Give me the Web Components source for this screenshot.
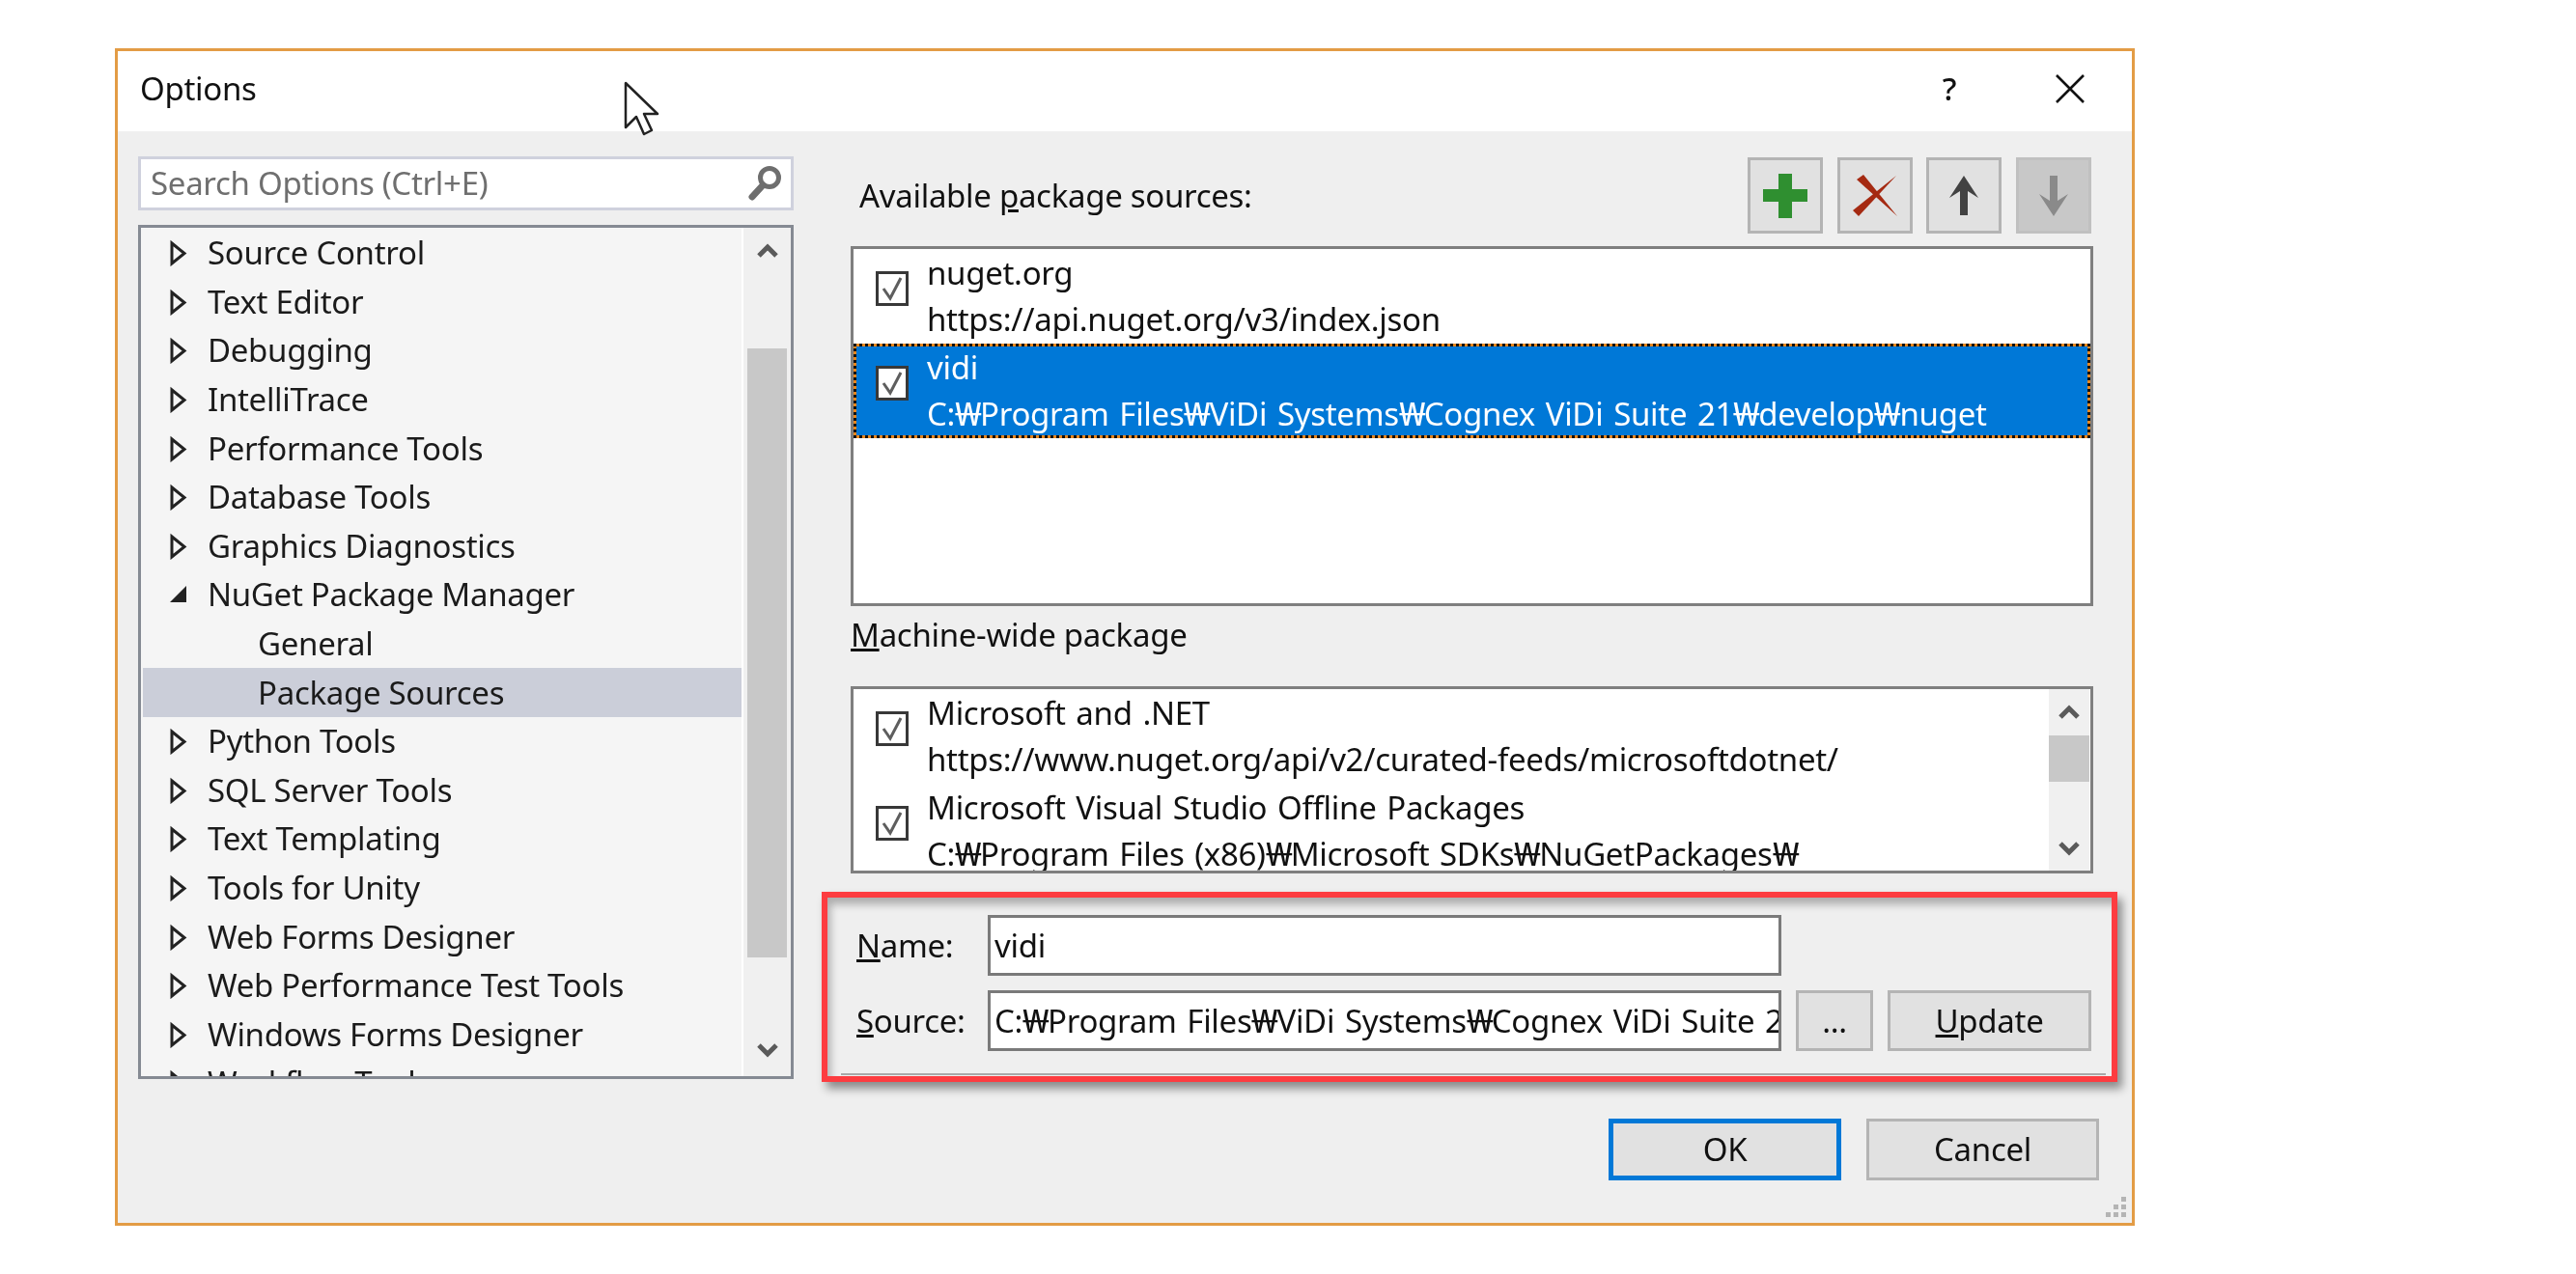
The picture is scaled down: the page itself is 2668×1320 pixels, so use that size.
<!DOCTYPE html>
<html lang="en"><head><meta charset="utf-8"><title>Options</title>
<style>
html,body{margin:0;background:#fff}
body{width:2668px;height:1320px;overflow:hidden;font:33px/48px "Noto Sans","Noto Sans CJK KR",sans-serif;letter-spacing:-.3px;color:#111}
</style></head><body>
<x-dialog>
  <x-titlebar slot="title">Options</x-titlebar>
  <x-search slot="search" placeholder="Search Options (Ctrl+E)"></x-search>
  <x-tree slot="tree">
    <x-node>Source Control</x-node><x-node>Text Editor</x-node><x-node>Debugging</x-node><x-node>IntelliTrace</x-node>
    <x-node>Performance Tools</x-node><x-node>Database Tools</x-node><x-node>Graphics Diagnostics</x-node>
    <x-node open>NuGet Package Manager</x-node><x-node child>General</x-node><x-node child selected>Package Sources</x-node>
    <x-node>Python Tools</x-node><x-node>SQL Server Tools</x-node><x-node>Text Templating</x-node><x-node>Tools for Unity</x-node>
    <x-node>Web Forms Designer</x-node><x-node>Web Performance Test Tools</x-node><x-node>Windows Forms Designer</x-node><x-node>Workflow Tools</x-node>
  </x-tree>
  <x-toolbar slot="right"><span slot="label">Available <u>p</u>ackage sources:</span></x-toolbar>
  <x-list slot="right" tall>
    <x-source name="nuget.org" url="https://api.nuget.org/v3/index.json"></x-source>
    <x-source selected name="vidi" url="C:₩Program Files₩ViDi Systems₩Cognex ViDi Suite 21₩develop₩nuget"></x-source>
  </x-list>
  <x-caption slot="right"><u>M</u>achine-wide package</x-caption>
  <x-list slot="right" scroll>
    <x-source name="Microsoft and .NET" url="https://www.nuget.org/api/v2/curated-feeds/microsoftdotnet/"></x-source>
    <x-source name="Microsoft Visual Studio Offline Packages" url="C:₩Program Files (x86)₩Microsoft SDKs₩NuGetPackages₩"></x-source>
  </x-list>
  <x-form slot="right"></x-form>
  <x-footer slot="right"></x-footer>
</x-dialog>
<script>
function def(name, css, html){
  customElements.define(name, class extends HTMLElement{
    connectedCallback(){
      if(this.shadowRoot) return;
      const r=this.attachShadow({mode:'open'});
      r.innerHTML='<style>'+css+'</style>'+(typeof html==='function'?html(this):html);
    }
  });
}
const path=s=>s.replace(/₩/g,'<span style="display:inline-block;width:26px;transform:scaleX(1.25);transform-origin:0 50%">₩</span>');
const chevUp='<svg width="24" height="18" viewBox="0 0 24 18"><path d="M3 14 12 5l9 9" fill="none" stroke="#5a5a5a" stroke-width="5"/></svg>';
const chevDn='<svg width="24" height="18" viewBox="0 0 24 18"><path d="M3 4l9 9 9-9" fill="none" stroke="#5a5a5a" stroke-width="5"/></svg>';

def('x-dialog',`
:host{display:block;position:relative;box-sizing:border-box;width:2092px;height:1220px;margin:50px 0 0 119px;border:3px solid #e39c45;background:#fff;filter:blur(.75px)}
.body{display:grid;grid-template-columns:679px 1287px;column-gap:59px;height:1131px;box-sizing:border-box;padding:26px 0 0 21px;background:#efefef}
.left{display:flex;flex-direction:column;gap:15px}
.right{display:flex;flex-direction:column}
.cursor{position:absolute;left:523px;top:31px}
.grip{position:absolute;right:3px;bottom:3px}
`,`<slot name="title"></slot>
<div class="body"><div class="left"><slot name="search"></slot><slot name="tree"></slot></div><div class="right"><slot name="right"></slot></div></div>
<svg class="cursor" width="38" height="58" viewBox="0 0 38 58"><path d="M3 2v46l11-11 8 18 8-4-8-17h14z" fill="#fff" stroke="#222" stroke-width="2.5" stroke-linejoin="round"/></svg>
<svg class="grip" width="26" height="26" viewBox="0 0 26 26" fill="#b4b4b4"><rect x="18" y="2" width="5" height="5"/><rect x="10" y="10" width="5" height="5"/><rect x="18" y="10" width="5" height="5"/><rect x="2" y="18" width="5" height="5"/><rect x="10" y="18" width="5" height="5"/><rect x="18" y="18" width="5" height="5"/></svg>`);

def('x-titlebar',`
:host{display:flex;align-items:center;height:83px;box-sizing:border-box;padding-left:23px;padding-bottom:5px;background:#fff;color:#111}
.t{flex:1}.q{width:40px;text-align:center;font-weight:500;margin-right:90px}
svg{margin-right:49px}
`,`<span class="t"><slot></slot></span><span class="q">?</span><svg width="30" height="30" viewBox="0 0 30 30"><path d="M1 1l28 28M29 1 1 29" stroke="#111" stroke-width="2.6"/></svg>`);

def('x-search',`
:host{display:flex;align-items:center;box-sizing:border-box;width:679px;height:56px;border:3px solid #cfd1dd;background:#fff;padding:0 8px 0 10px;color:#6f6f6f}
.p{flex:1}
`,h=>`<span class="p">${h.getAttribute('placeholder')}</span><svg width="36" height="40" viewBox="0 0 36 40"><circle cx="22" cy="14" r="9.5" fill="none" stroke="#6e6e6e" stroke-width="5"/><path d="M15 22 4 34" stroke="#6e6e6e" stroke-width="7" stroke-linecap="round"/></svg>`);

def('x-tree',`
:host{display:flex;box-sizing:border-box;width:679px;height:885px;border:3px solid #858a93;background:#f5f5f5;overflow:hidden}
.rows{flex:1;min-width:0;padding:1px 0 0 2px;overflow:hidden}
.sb{flex:none;width:49px;border-left:2px solid #fff;background:#f0f0f0;display:flex;flex-direction:column;align-items:center}
.up,.dn{flex:none;height:125px;display:flex;justify-content:center;padding-top:15px;box-sizing:border-box}
.th{flex:none;align-self:stretch;height:631px;background:#c8c8c8;margin:0 4px}
.dn{height:123px;align-items:flex-end;padding:0 0 18px}
`,`<div class="rows"><slot></slot></div><div class="sb"><div class="up">${chevUp}</div><div class="th"></div><div class="dn">${chevDn}</div></div>`);

def('x-node',`
:host{display:flex;align-items:center;height:50.6px;box-sizing:border-box;padding-left:27px;white-space:nowrap;color:#1b1b1b}
:host([selected]){background:#cbced9}
:host([child]){padding-left:119px}
svg{flex:none;width:20px;height:28px;margin-right:20px}
`,h=>{
  if(h.hasAttribute('child')) return '<slot></slot>';
  const i=h.hasAttribute('open')?'<path d="M1 22 18 5v17z" fill="#222"/>':'<path d="M3 4v21l13-10.500z" fill="none" stroke="#222" stroke-width="3"/>';
  return `<svg viewBox="0 0 20 28">${i}</svg><slot></slot>`;
});

def('x-toolbar',`
:host{display:flex;align-items:center;padding:1px 2px 13px 9px;height:79px;color:#111}
.l{flex:1}
.b{display:grid;grid-template-columns:repeat(4,78px);column-gap:14.67px}
.i{box-sizing:border-box;height:79px;border:3px solid #b4b4b4;background:#e1e1e1;display:flex;align-items:center;justify-content:center}
.i.off{background:#c8c8c8;border-color:#c0c0c0}
`,`<span class="l"><slot name="label"></slot></span><div class="b">
<div class="i"><svg width="48" height="48" viewBox="0 0 48 48"><path d="M17 1h14v16h16v13H31v17H17V30H1V17h16z" fill="#2f8f30"/></svg></div>
<div class="i"><svg width="48" height="48" viewBox="0 0 48 48" fill="#a52a12"><path d="M1 39l6 6L46 3z"/><path d="M5 7l7-5 35 43z"/></svg></div>
<div class="i"><svg width="34" height="44" viewBox="0 0 34 44"><path d="M17 1 32 24 21 17v25h-8V17L2 24z" fill="#424242"/></svg></div>
<div class="i off"><svg width="34" height="44" viewBox="0 0 34 44"><path d="M17 43 32 20 21 27V1h-8v26L2 20z" fill="#8a8a8a"/></svg></div></div>`);

def('x-list',`
:host{display:flex;box-sizing:border-box;width:1287px;height:194px;border:3px solid #7f7f7f;background:#fff;overflow:hidden}
:host([tall]){height:373px}
.rows{flex:1;min-width:0}
.sb{display:none}
:host([scroll]) .sb{flex:none;display:flex;flex-direction:column;width:42px;margin-right:1px;background:#f0f0f0}
.u,.d{display:flex;justify-content:center;align-items:center}
.u{height:48px}.d{flex:1;align-items:flex-end;padding-bottom:14px}
.t{height:48px;background:#c8c8c8}
`,`<div class="rows"><slot></slot></div><div class="sb"><div class="u">${chevUp}</div><div class="t"></div><div class="d">${chevDn}</div></div>`);

def('x-source',`
:host{display:flex;align-items:center;height:98px;box-sizing:border-box;padding-left:23px;color:#111;white-space:nowrap;word-spacing:2.5px}
:host([selected]){border:3px dotted #111;background:linear-gradient(#0078d7,#0078d7) padding-box,#e8871e border-box;color:#fff;padding-left:20px}
.c{flex:none;box-sizing:border-box;width:34px;height:36px;border:3px solid #383838;background:#fff;margin:0 19px 16px 0;display:flex;align-items:center;justify-content:center}
.x{line-height:48px}.x div{height:48px}
`,h=>`<div class="c"><svg width="26" height="28" viewBox="0 0 26 28"><path d="M4 14l7 10L22 3" fill="none" stroke="#5e5e5e" stroke-width="3"/></svg></div><div class="x"><div>${h.getAttribute('name')}</div><div>${path(h.getAttribute('url'))}</div></div>`);

def('x-caption',`:host{display:flex;align-items:center;height:83px;box-sizing:border-box;padding-bottom:23px;color:#111}`,`<slot></slot>`);

def('x-form',`
:host{display:block;position:relative;box-sizing:border-box;width:1342px;height:197px;margin:19px 0 0 -30px;padding:24px 0 0 36px;color:#111}
.g{display:grid;grid-template-columns:136px 822px 95px 226px;row-gap:15px;grid-auto-rows:63px;align-items:stretch}
.l{display:flex;align-items:center}
.f{box-sizing:border-box;border:3px solid #7a7a7a;background:#fff;padding:0 0 0 4px;display:flex;align-items:center;overflow:hidden;white-space:nowrap;word-spacing:2.5px}
.b{box-sizing:border-box;border:3px solid #b4b4b4;background:#e1e1e1;display:flex;align-items:center;justify-content:center;margin-left:15px}
.line{position:absolute;left:20px;right:12px;bottom:7px;height:2px;background:#a9a9a9}
.mark{position:absolute;inset:0;box-sizing:border-box;border:6px solid #fd3c40;box-shadow:5px 7px 9px rgba(0,0,0,.42),inset 6px 10px 9px -3px rgba(0,0,0,.28);pointer-events:none}
`,`<div class="g"><span class="l"><span><u>N</u>ame:</span></span><div class="f">vidi</div><span></span><span></span>
<span class="l"><span><u>S</u>ource:</span></span><div class="f"><span>${path('C:₩Program Files₩ViDi Systems₩Cognex ViDi Suite 21₩develop₩nuget')}</span></div><div class="b">...</div><div class="b"><span><u>U</u>pdate</span></div></div>
<div class="line"></div><div class="mark"></div>`);

def('x-footer',`
:host{display:flex;justify-content:flex-end;gap:26px;margin:38px -6px 0 0;color:#111}
.b{box-sizing:border-box;width:241px;height:64px;border:3px solid #b4b4b4;background:#e1e1e1;display:flex;align-items:center;justify-content:center}
.ok{border:5px solid #0078d7}
`,`<div class="b ok">OK</div><div class="b">Cancel</div>`);
</script>
</body></html>
